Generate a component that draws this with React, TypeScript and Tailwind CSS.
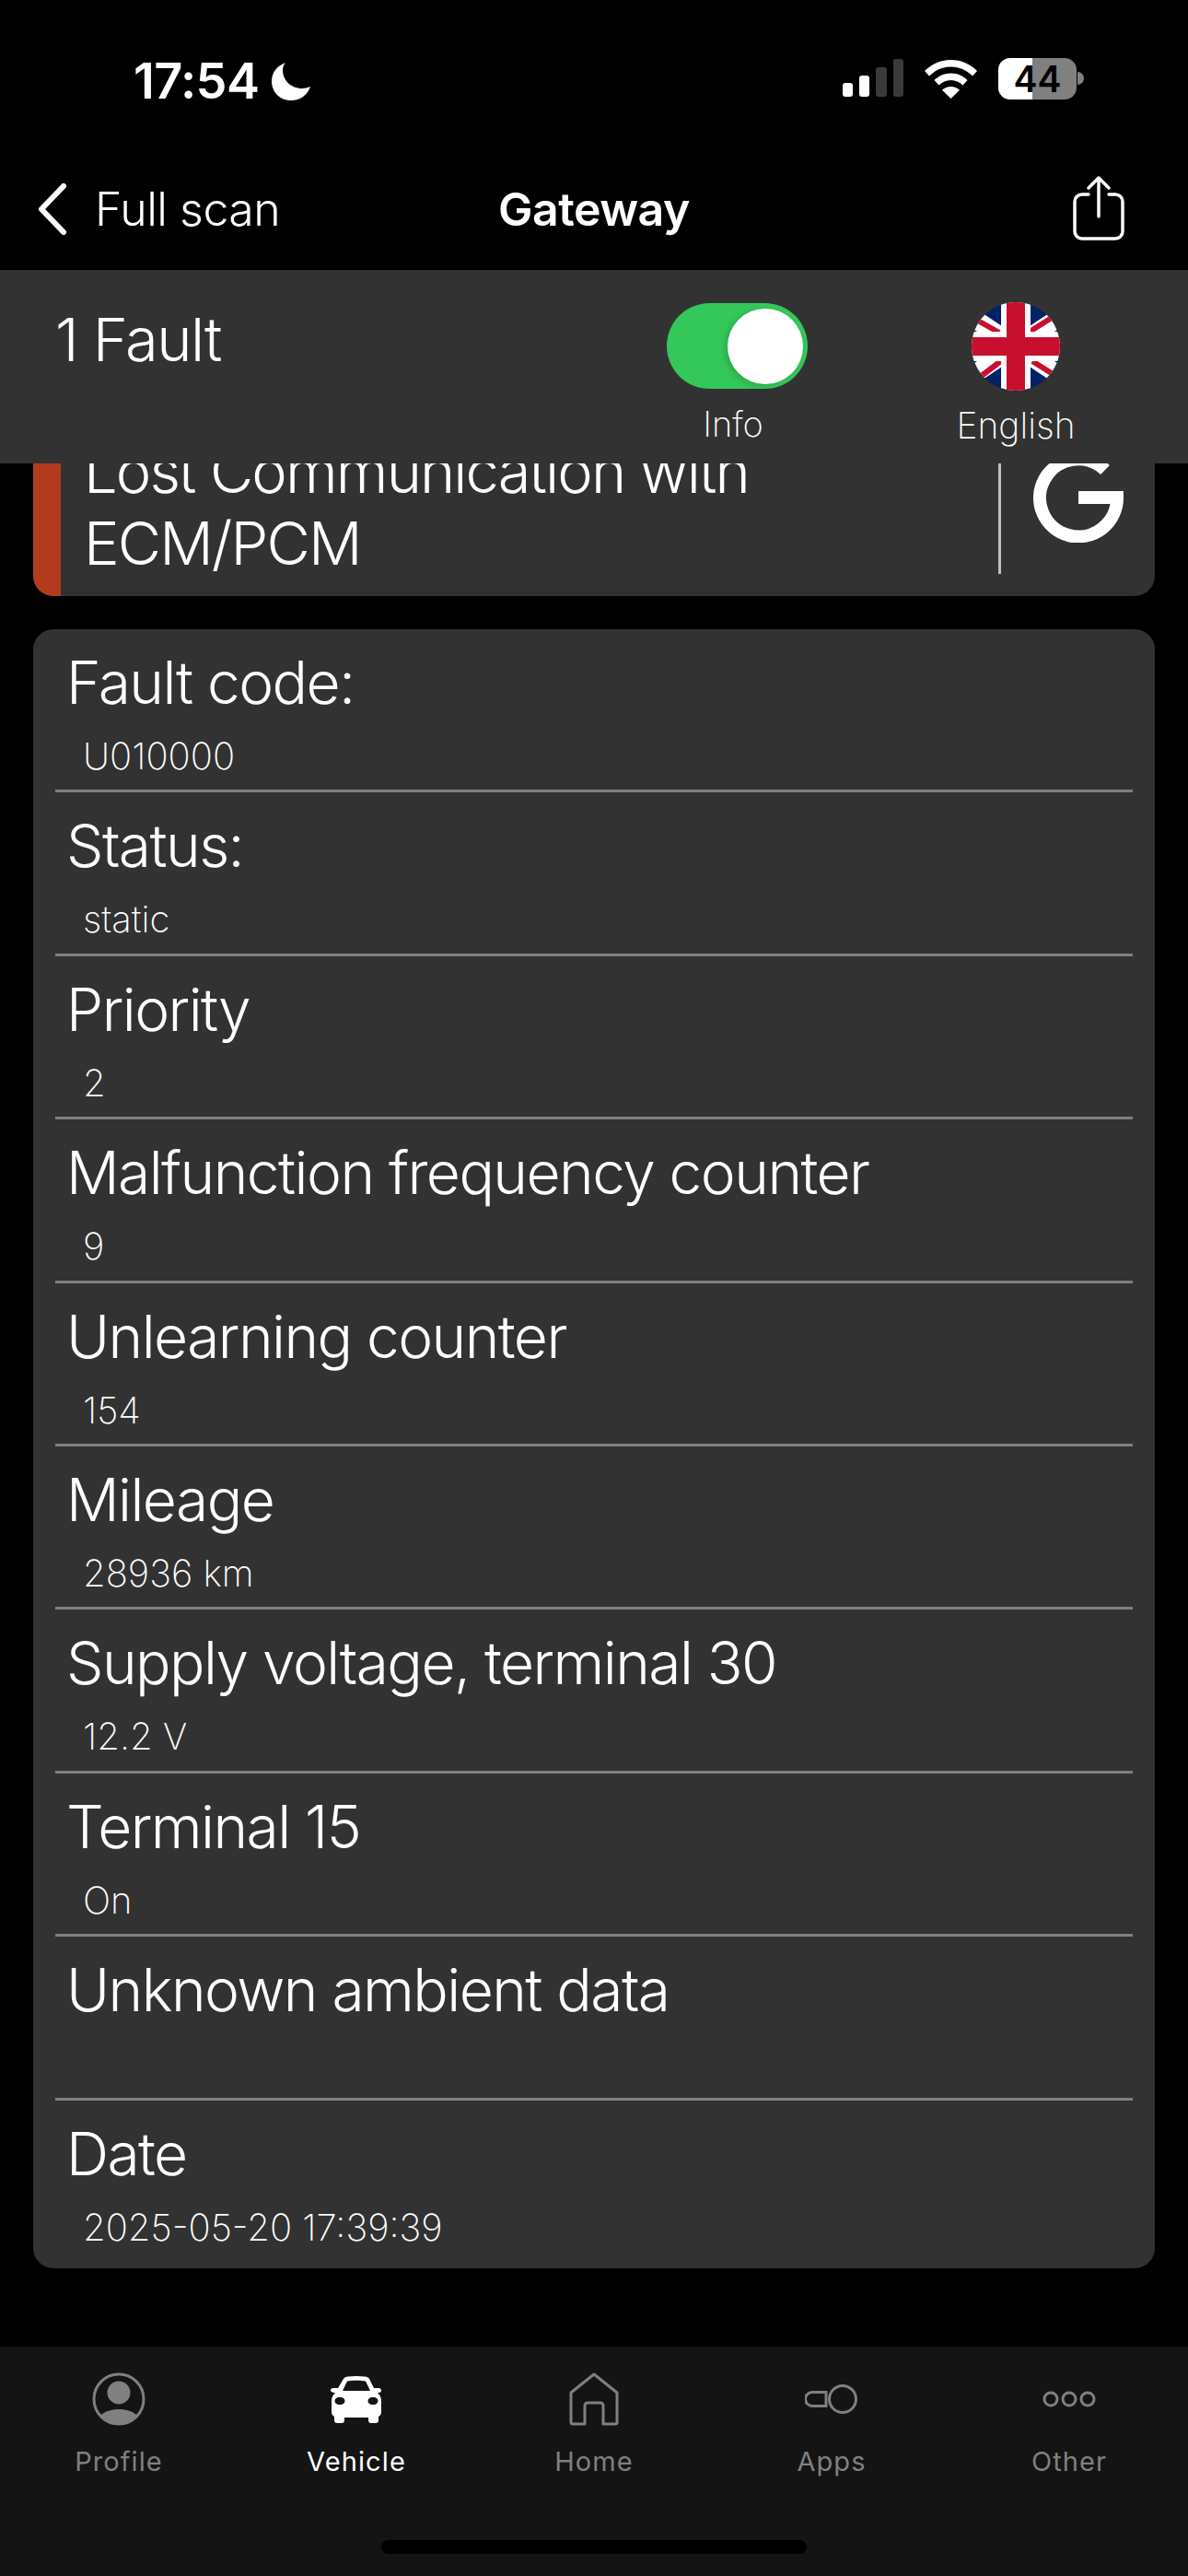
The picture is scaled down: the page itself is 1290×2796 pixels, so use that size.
const rows = [
  { title: "Fault code:", value: "U010000" },
  { title: "Status:", value: "static" },
  { title: "Priority", value: "2" },
  { title: "Malfunction frequency counter", value: "9" },
  { title: "Unlearning counter", value: "154" },
  { title: "Mileage", value: "28936 km" },
  { title: "Supply voltage, terminal 30", value: "12.2 V" },
  { title: "Terminal 15", value: "On" },
  { title: "Unknown ambient data", value: "" },
];

function StatusBar() {
  return (
    <div className="flex h-[170px] items-start justify-between pl-[145px] pr-[113px] pt-[60px] text-white">
      <div className="flex items-center gap-[14px]">
        <span className="text-[54px] font-semibold leading-[56px] tracking-[-0.6px]">17:54</span>
        <svg width="44" height="42" viewBox="0 0 44 42" fill="white">
          <path d="M15 1C5 5 0 12 0 21c0 12 9 21 21 21 10 0 18-6 21-15-3 1-6 2-9 2C21 29 12 20 12 9c0-3 1-6 3-8z" />
        </svg>
      </div>
      <div className="flex items-start pt-[4px]">
        <div className="flex items-end gap-[7px] h-[41px]">
          <div className="h-[15px] w-[11px] rounded-[3px] bg-white" />
          <div className="h-[23px] w-[11px] rounded-[3px] bg-white" />
          <div className="h-[32px] w-[12px] rounded-[3px] bg-[#3a3a3a]" />
          <div className="h-[41px] w-[11px] rounded-[3px] bg-[#3a3a3a]" />
        </div>
        <svg className="ml-[23px] mt-[1px]" width="57" height="42" viewBox="0 0 57 42" fill="white">
          <path d="M28.5 0C17 0 7.5 4.5 0 12l5 5.500C11.500 11 19.500 7.500 28.500 7.500S45.500 11 52 17.500L57 12C49.500 4.500 40 0 28.500 0z" />
          <path d="M28.500 14.500c-7 0-13 2.700-18 7.500l5 5.500c3.500-3.400 8-5.500 13-5.500s9.500 2.100 13 5.500l5-5.500c-5-4.800-11-7.500-18-7.500z" />
          <path d="M28.500 29c-3.700 0-7 1.400-9.500 3.700L28.500 42 38 32.700C35.500 30.400 32.200 29 28.500 29z" />
        </svg>
        <div className="relative ml-[23px] -mt-[1px] flex h-[45px] w-[85px] overflow-hidden rounded-[13px] bg-[#808080]">
          <div className="h-full w-[37px] bg-white" />
          <span className="absolute inset-0 text-center text-[39px] font-semibold leading-[45px] text-black">44</span>
        </div>
        <div className="ml-[1px] mt-[14px] h-[14px] w-[7px] rounded-r-full bg-[#808080]" />
      </div>
    </div>
  );
}

function NavBar() {
  return (
    <div className="grid h-[123px] grid-cols-3 items-start text-white">
      <div className="flex items-center pl-[41px] pt-[29px]">
        <svg width="32" height="56" viewBox="0 0 32 56" fill="none" stroke="white" strokeWidth="6" strokeLinecap="round" strokeLinejoin="round">
          <path d="M28 3 4 28l24 25" />
        </svg>
        <span className="ml-[30px] text-[50px] font-light leading-[56px] tracking-[-0.5px]">Full scan</span>
      </div>
      <div className="pt-[29px] text-center text-[50px] font-semibold leading-[56px] tracking-[-0.5px]">Gateway</div>
      <div className="flex justify-end pr-[69px] pt-[20px]">
        <svg width="56" height="71" viewBox="0 0 56 71" fill="none" stroke="white" strokeWidth="3.500" strokeLinecap="round" strokeLinejoin="round">
          <path d="M17 21H10a8 8 0 0 0-8 8v32a8 8 0 0 0 8 8h36a8 8 0 0 0 8-8V29a8 8 0 0 0-8-8h-7" />
          <path d="M28 45V3M17 14 28 3l11 11" />
        </svg>
      </div>
    </div>
  );
}

function UkFlag() {
  return (
    <svg className="h-[96px] w-[96px] rounded-full" viewBox="0 0 96 96">
      <rect width="96" height="96" fill="#012169" />
      <path d="M-10 9.400 106 86.600M106 9.400-10 86.600" stroke="white" strokeWidth="20" />
      <path d="M5 19 30 33M63 32 90 15M8 82 33 63M66 64 93 81" stroke="#c8102e" strokeWidth="6" />
      <path d="M48 0V96M0 48H96" stroke="white" strokeWidth="32" />
      <path d="M48 0V96M0 48H96" stroke="#c8102e" strokeWidth="20" />
    </svg>
  );
}

function HeaderPanel() {
  return (
    <div className="relative z-10 flex h-[210px] shrink-0 bg-[#323232] text-white">
      <div className="pl-[60px] pt-[37px] text-[65px] font-light leading-[78px] tracking-[-1.500px]">1 Fault</div>
      <div className="absolute left-[724px] top-[36px] flex w-[153px] flex-col items-center">
        <div className="flex h-[93px] w-[153px] items-center justify-end rounded-full bg-[#34c759] pr-[5px]">
          <div className="h-[82px] w-[82px] rounded-full bg-white shadow-[-3px_2px_6px_rgba(0,0,0,0.15)]" />
        </div>
        <span className="-ml-[9px] mt-[20px] text-[38px] font-extralight leading-[36px]">Info</span>
      </div>
      <div className="absolute left-[1003px] top-[35px] flex w-[200px] flex-col items-center">
        <UkFlag />
        <span className="mt-[20px] text-[39px] font-extralight leading-[36px]">English</span>
      </div>
    </div>
  );
}

function FaultCard() {
  return (
    <div className="-mt-[33px] flex h-[177px] overflow-hidden rounded-[22px] bg-[#323232] text-white">
      <div className="w-[30px] shrink-0 bg-[#b33a1c]" />
      <div className="flex-1 pl-[25px] pt-[3px] text-[65px] font-light leading-[78px] tracking-[-1.900px]">
        Lost Communication with
        <br />
        ECM/PCM
      </div>
      <div className="flex w-[170px] shrink-0">
        <div className="mb-[24px] w-[3px] bg-[#c0c0c0]" />
        <svg className="ml-[35px] mt-[21px]" width="98" height="98" viewBox="0 0 98 98" fill="none">
          <path d="M49 49h42a42 42 0 1 1-13-30" stroke="white" strokeWidth="14" />
        </svg>
      </div>
    </div>
  );
}

function DetailRow({ title, value, last }: { title: string; value: string; last?: boolean }) {
  return (
    <div className={last ? "h-[182px] mx-[24px]" : "h-[177.400px] mx-[24px] border-b-[3px] border-[#808080]"}>
      <div className="pl-[12px] pt-[19px] text-[64px] font-light leading-[78px] tracking-[-1.550px]">{title}</div>
      <div className="mt-[18px] pl-[30px] text-[40px] font-extralight leading-[46px]">{value}</div>
    </div>
  );
}

function DetailCard() {
  return (
    <div className="mt-[36px] rounded-[22px] bg-[#323232] text-white">
      {rows.map((r) => (
        <DetailRow key={r.title} title={r.title} value={r.value} />
      ))}
      <DetailRow title="Date" value="2025-05-20 17:39:39" last />
    </div>
  );
}

function TabBar() {
  const tabs = [
    {
      label: "Profile",
      icon: (
        <svg width="58" height="58" viewBox="0 0 58 58" fill="none">
          <circle cx="29" cy="29" r="27" stroke="#808080" strokeWidth="3" />
          <circle cx="29" cy="22" r="12.500" fill="#808080" />
          <path d="M9 47c5-5 12-7 20-7s15 2 20 7c-5 6-12 9-20 9s-15-3-20-9z" fill="#808080" />
        </svg>
      ),
    },
    {
      label: "Vehicle",
      icon: (
        <svg width="58" height="58" viewBox="0 0 58 58" fill="white">
          <path fillRule="evenodd" d="M15 7c1-1.500 2.500-2.500 5-2.500 6-.7 12-.7 18 0 2.500 0 4 1 5 2.500l5 10h5c2 0 3 1 3 2.500S55 22 53.500 22H52c3 3 4 6 4 9v12c0 2-1 4-3 5v4c0 2-1 3-3 3h-5c-2 0-3-1-3-3v-3H16v3c0 2-1 3-3 3H8c-2 0-3-1-3-3v-4c-2-1-3-3-3-5V31c0-3 1-6 4-9H4.500C3 22 1 21 1 19.500S2 17 4 17h5zM19 9.500 14 20h30L39 9.500c-6-1-14-1-20 0zM10 27a4.500 4 0 0 0 0 8h2a4.500 4 0 0 0 0-8zm36 0a4.500 4 0 0 0 0 8h2a4.500 4 0 0 0 0-8z" />
        </svg>
      ),
    },
    {
      label: "Home",
      icon: (
        <svg width="56" height="58" viewBox="0 0 56 58" fill="none" stroke="#808080" strokeWidth="3" strokeLinejoin="round">
          <path d="M28 2 3 22v32a2 2 0 0 0 2 2h13V36a3 3 0 0 1 3-3h14a3 3 0 0 1 3 3v20h13a2 2 0 0 0 2-2V22z" />
        </svg>
      ),
    },
    {
      label: "Apps",
      icon: (
        <svg width="58" height="58" viewBox="0 0 58 58" fill="none" stroke="#808080" strokeWidth="3">
          <path d="M23 21.500H8a6.500 6.500 0 0 0 0 15h15z" />
          <circle cx="41" cy="29" r="14.500" />
        </svg>
      ),
    },
    {
      label: "Other",
      icon: (
        <svg width="58" height="58" viewBox="0 0 58 58" fill="none" stroke="#808080" strokeWidth="3">
          <circle cx="9" cy="29" r="7" />
          <circle cx="29" cy="29" r="7" />
          <circle cx="49" cy="29" r="7" />
        </svg>
      ),
    },
  ];
  return (
    <div className="relative mt-auto h-[249px] shrink-0 bg-[#141414]">
      <div className="grid grid-cols-5 pt-[28px]">
        {tabs.map((t) => (
          <div key={t.label} className="flex flex-col items-center">
            {t.icon}
            <span className={"mt-[21px] text-[29px] font-normal leading-[36px] tracking-[1.100px] " + (t.label === "Vehicle" ? "text-white" : "text-[#808080]")}>
              {t.label}
            </span>
          </div>
        ))}
      </div>
      <div className="absolute bottom-[24px] left-[414px] h-[15px] w-[462px] rounded-full bg-black" />
    </div>
  );
}

export default function App() {
  return (
    <div className="flex h-[2796px] w-full flex-col overflow-hidden bg-black font-['Inter',sans-serif]">
      <StatusBar />
      <NavBar />
      <HeaderPanel />
      <div className="px-[36px]">
        <FaultCard />
        <DetailCard />
      </div>
      <TabBar />
    </div>
  );
}
